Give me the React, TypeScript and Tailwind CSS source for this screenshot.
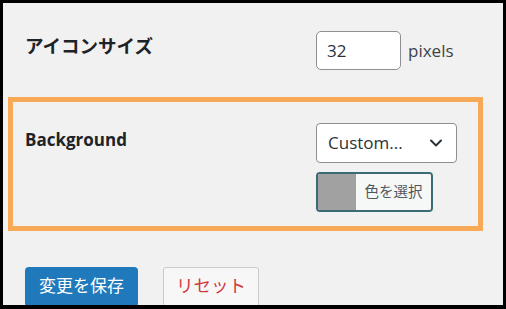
import React from "react";

const jp = { fontFamily: '"Open Sans", "Noto Sans CJK JP", sans-serif' };

export default function App() {
  return (
    <div className="w-[506px] h-[309px] bg-black pt-[3px] pl-[3px] pr-[3px] pb-[4px]" style={jp}>
      <div className="w-full h-full bg-[#f1f1f1] overflow-hidden">
        {/* Row 1 */}
        <div className="flex pt-[28px] pl-[22px]">
          <div className="w-[291px] pt-[3px] text-[18.5px] leading-[24px] font-bold text-[#1d2327]">
            アイコンサイズ
          </div>
          <div className="flex items-center">
            <div className="w-[85px] h-[39px] border border-[#8c8f94] rounded-[5px] bg-white flex items-center pl-[10px] text-[17px] text-[#2c3338]">
              32
            </div>
            <span className="ml-[7px] text-[17px] text-[#3c434a]">pixels</span>
          </div>
        </div>

        {/* Highlighted box */}
        <div className="mt-[27px] ml-[5px] w-[475px] h-[134px] border-[5px] border-[#f8a957] flex pl-[12px] pt-[21px]">
          <div className="w-[291px] pt-[5px] text-[17px] leading-[24px] font-bold text-[#1d2327]">
            Background
          </div>
          <div className="flex flex-col">
            <div className="w-[141px] h-[40px] border border-[#8c8f94] rounded-[4px] bg-white flex items-center justify-between pl-[11px] pr-[12px] text-[17px] text-[#2c3338]">
              <span>Custom...</span>
              <svg width="16" height="16" viewBox="0 0 16 16" fill="none">
                <path d="M3 5.5 L8 10.5 L13 5.5" stroke="#2c3338" strokeWidth="2" strokeLinecap="round" strokeLinejoin="round" />
              </svg>
            </div>
            <div className="mt-[9px] w-[117px] h-[40px] border-[2px] border-[#3a6a72] rounded-[4px] overflow-hidden flex">
              <div className="w-[38px] h-full bg-[#a1a1a1]" />
              <div className="flex-1 bg-[#f6f7f7] flex items-center justify-center text-[14.5px] text-[#50575e]">
                色を選択
              </div>
            </div>
          </div>
        </div>

        {/* Buttons */}
        <div className="flex mt-[36px] pl-[22px] gap-[25px]">
          <div className="w-[113px] h-[40px] bg-[#1f79ba] rounded-[4px] flex items-center justify-center pb-[3px] text-[17px] text-white">
            変更を保存
          </div>
          <div className="w-[96px] h-[40px] border border-[#c9cacc] bg-[#f7f7f7] rounded-[3px] flex items-center justify-center pb-[3px] text-[17.5px] text-[#d03a3e]">
            リセット
          </div>
        </div>
      </div>
    </div>
  );
}
